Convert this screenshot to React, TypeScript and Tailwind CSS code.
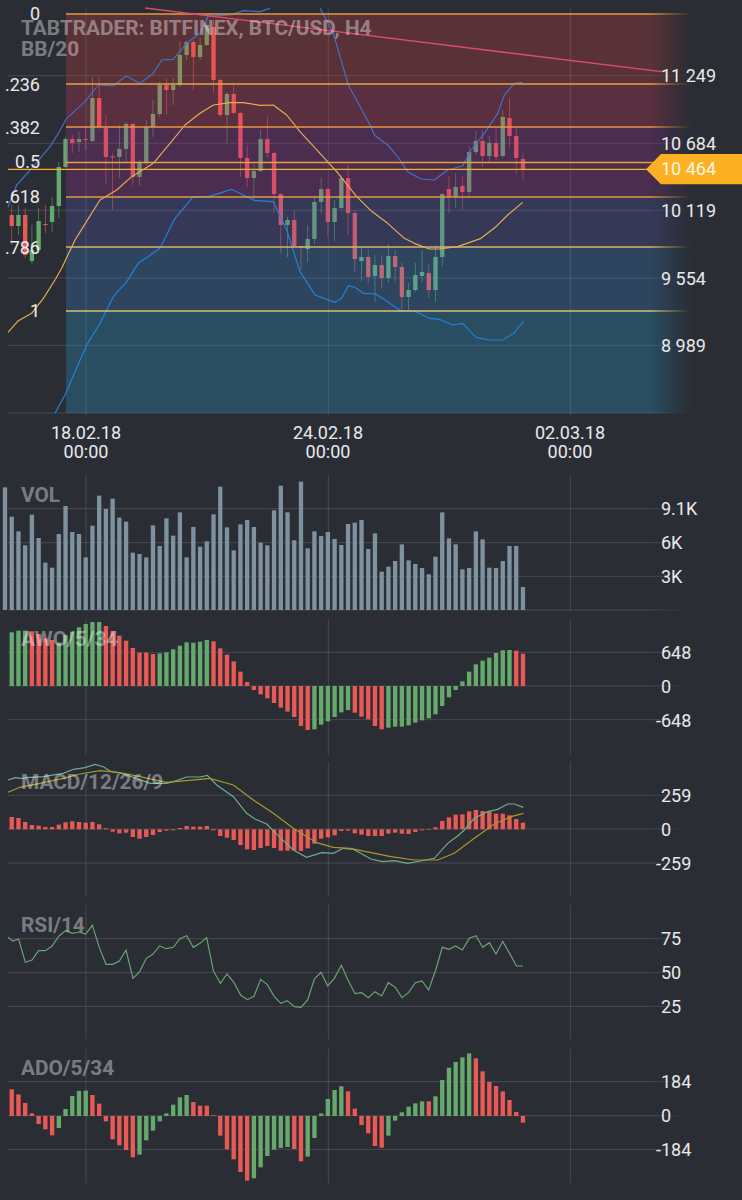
import type { ReactNode } from 'react';

const BG = '#2a2d34';
const RED = '#e95a56';
const GREEN = '#66a96c';
const GRID = 'rgba(255,255,255,0.14)';

// everything below is in 3x pixels, the same scale as the zoomed reference
const slot = (i: number) => 15 + 20.18 * i;
const poly = (pts: number[][]) => pts.map((p) => p.join(',')).join(' ');
const runs = (list: [string, number][]) => list.flatMap(([c, n]) => Array<string>(n).fill(c));

// wick top, body top, body bottom, wick bottom (px), colour. First one is slot 1.
const candles: [number, number, number, number, string][] = [
  [205, 215, 226, 245, 'r'], [205, 215, 226, 235, 'g'], [208, 215, 255, 258, 'r'], [225, 250, 261, 264, 'g'],
  [208, 221, 250, 253, 'g'], [205, 224, 225, 233, 'r'], [197, 206, 222, 232, 'g'], [162, 167, 206, 218, 'g'],
  [137, 139, 167, 168, 'g'], [135, 139, 143, 153, 'r'], [132, 139, 142, 152, 'g'], [128, 139, 140, 150, 'r'],
  [77, 98, 141, 142, 'g'], [77, 98, 127, 129, 'r'], [115, 128, 157, 184, 'r'], [153, 156.5, 157.5, 210, 'r'],
  [125, 149, 157, 178, 'g'], [122, 124, 149, 162, 'g'], [123, 124, 177, 185, 'r'], [160, 162, 177, 185, 'g'],
  [120, 127, 162, 165, 'g'], [100, 114, 127, 137, 'g'], [82, 85, 114, 117, 'g'], [78, 85, 90, 115, 'r'],
  [78, 85, 90, 105, 'g'], [41, 55, 85, 87, 'g'], [40, 42, 55, 60, 'g'], [40, 42, 57, 90, 'r'],
  [37, 45, 57, 60, 'g'], [17, 25, 45, 46, 'g'], [20, 27, 80, 93, 'r'], [78, 80, 115, 117, 'r'],
  [92, 94, 115, 143, 'g'], [84, 94, 113, 114, 'r'], [112, 113, 158, 177, 'r'], [145, 158, 178, 187, 'r'],
  [163, 171, 178, 200, 'g'], [130, 139, 171, 172, 'g'], [117, 139, 153, 158, 'r'], [152, 153, 194, 213, 'r'],
  [193, 194, 225, 253, 'r'], [217, 220, 225, 257, 'g'], [210, 220, 246, 247, 'r'], [246, 246, 248, 270, 'r'],
  [225, 239, 249, 262, 'g'], [198, 202, 239, 244, 'g'], [178, 189, 202, 213, 'g'], [187, 189, 222, 236, 'r'],
  [200, 208, 222, 241, 'g'], [175, 178, 208, 209, 'g'], [165, 178, 213, 235, 'r'], [210, 213, 259, 272, 'r'],
  [248, 257, 261, 281, 'g'], [250, 257, 277, 283, 'r'], [255, 265, 276, 302, 'g'], [255, 265, 278, 288, 'r'],
  [244, 256, 278, 283, 'g'], [250, 256, 267, 283, 'r'], [262, 267, 297, 310, 'r'], [283, 290, 297, 310, 'g'],
  [263, 275, 290, 292, 'g'], [250, 272, 276, 282, 'g'], [264, 273, 290, 298, 'r'], [245, 257, 290, 302, 'g'],
  [193, 194, 257, 267, 'g'], [176, 189, 197, 213, 'r'], [173, 187, 197, 208, 'g'], [176, 186, 192, 210, 'r'],
  [146, 152, 192, 198, 'g'], [131, 141, 152, 155, 'g'], [130, 141, 156, 167, 'r'], [136, 143, 156, 163, 'g'],
  [127, 143, 157, 160, 'r'], [110, 117, 156, 158, 'g'], [98, 118, 136, 147, 'r'], [128, 136, 158, 174, 'r'],
  [153, 159, 169, 180, 'r'],
];

const bbUpper = [
  [24, 622], [50, 555], [100, 500], [150, 440], [175, 400], [200, 355], [255, 305], [295, 255], [340, 258], [378, 228],
  [420, 250], [460, 220], [485, 180], [520, 178], [560, 130], [600, 100], [625, 48], [690, 45], [730, 32], [780, 35], [810, 25],
];
const bbUpper2 = [
  [960, 25], [1000, 100], [1045, 255], [1113, 380], [1123, 405], [1163, 435], [1193, 470], [1223, 515], [1263, 537],
  [1303, 540], [1343, 510], [1388, 498], [1413, 450], [1453, 400], [1493, 340], [1513, 285], [1543, 250], [1568, 247],
];
const bbLower = [
  [165, 1240], [195, 1185], [260, 1035], [300, 970], [340, 890], [380, 845], [415, 790], [480, 745], [525, 655], [580, 590],
  [625, 590], [695, 568], [765, 602], [820, 605], [860, 690], [900, 815], [945, 885], [1005, 907], [1025, 895], [1045, 857],
  [1065, 862], [1090, 880], [1128, 882], [1203, 933], [1243, 933], [1288, 955], [1318, 958], [1358, 975], [1388, 970],
  [1428, 1012], [1468, 1020], [1508, 1020], [1543, 998], [1571, 963],
];
const ma = [
  [24, 997], [55, 962], [95, 940], [130, 895], [165, 840], [185, 805], [225, 720], [250, 680], [300, 600], [350, 570],
  [395, 530], [460, 490], [510, 430], [555, 375], [600, 340], [640, 315], [690, 308], [730, 308], [780, 316], [820, 315],
  [860, 345], [900, 395], [960, 460], [1010, 515], [1070, 590], [1113, 632], [1163, 670], [1213, 715], [1243, 730],
  [1288, 747], [1318, 747], [1373, 740], [1443, 715], [1488, 680], [1523, 645], [1568, 607],
];

const zones = [
  { y: 14, h: 70, fill: 'rgba(232,68,64,0.25)' },
  { y: 84, h: 43, fill: 'rgba(236,56,96,0.25)' },
  { y: 127, h: 70, fill: 'rgba(172,48,160,0.25)' },
  { y: 197, h: 50, fill: 'rgba(88,96,192,0.25)' },
  { y: 247, h: 64, fill: 'rgba(56,144,224,0.25)' },
  { y: 311, h: 102, fill: 'rgba(40,176,232,0.25)' },
];
const fibLines = [
  { y: 14, c: '#e39a3e' }, { y: 84, c: '#e9a04a' }, { y: 127, c: '#e9983f' }, { y: 162.5, c: '#e9a040' },
  { y: 197, c: '#dd9c48' }, { y: 247, c: '#d9b468' }, { y: 311, c: '#d9c274' },
];
const fibLabels = ['0', '.236', '.382', '0.5', '.618', '.786', '1'];

const vol = [
  52, 140, 184, 226, 134, 204, 278, 293, 192, 108, 186, 192, 262, 167, 77, 117, 86, 143, 155, 248, 252, 262, 166, 228, 145, 197,
  127, 262, 171, 230, 214, 133, 50, 172, 241, 163, 150, 171, 218, 226, 121, 47, 127, 211, 35, 235, 184, 198, 186, 207, 225, 162,
  158, 150, 237, 190, 305, 290, 273, 223, 271, 282, 294, 313, 260, 127, 205, 223, 298, 294, 184, 208, 293, 294, 273, 228, 228, 351,
];
const awo = [
  487, 482, 482, 484, 492, 505, 510, 518, 495, 485, 472, 462, 456, 456, 468, 483, 497, 512, 534, 548, 548, 552, 550, 547, 538, 527,
  517, 518, 515, 510, 514, 535, 554, 574, 605, 636, 660, 673, 685, 699, 713, 725, 741, 768, 780, 778, 764, 754, 741, 727, 720, 728,
  740, 748, 768, 778, 773, 770, 770, 766, 758, 751, 745, 733, 708, 682, 660, 634, 605, 583, 572, 563, 549, 541, 540, 542, 551,
];
const awoColors = runs([['g', 3], ['r', 4], ['g', 7], ['r', 8], ['g', 8], ['r', 15], ['g', 6], ['r', 5], ['g', 19], ['r', 2]]);
const macd = [
  201, 204, 216, 225, 227, 231, 231, 224, 217, 214, 216, 218, 216, 223, 235, 245, 250, 248, 261, 266, 261, 255, 246, 242, 241, 234,
  228, 230, 230, 228, 241, 258, 263, 270, 285, 298, 300, 294, 288, 294, 302, 302, 301, 303, 295, 281, 266, 262, 256, 243, 242, 250,
  254, 258, 258, 258, 251, 248, 251, 252, 246, 241, 240, 232, 213, 202, 194, 193, 184, 180, 183, 184, 191, 191, 196, 207, 218,
];
const macdFast = [
  [24, 90], [45, 83], [65, 85], [90, 82], [130, 80], [190, 70], [220, 58], [255, 53], [285, 43], [310, 50], [330, 63], [370, 72],
  [410, 85], [450, 100], [500, 100], [530, 92], [560, 81], [600, 81], [622, 76], [650, 105], [700, 140], [740, 190], [765, 207],
  [800, 222], [840, 262], [880, 300], [920, 322], [965, 308], [1000, 310], [1030, 295], [1060, 298], [1113, 327], [1148, 335],
  [1183, 332], [1223, 340], [1263, 333], [1303, 325], [1343, 280], [1373, 258], [1393, 240], [1423, 205], [1463, 185], [1493, 178],
  [1523, 162], [1543, 162], [1570, 172],
];
const macdSlow = [
  [24, 127], [60, 112], [120, 100], [190, 85], [240, 72], [300, 62], [360, 68], [420, 80], [500, 97], [560, 92], [630, 85], [700, 105],
  [760, 150], [820, 190], [880, 235], [950, 278], [1000, 292], [1050, 295], [1113, 308], [1173, 320], [1243, 330], [1313, 330],
  [1363, 310], [1423, 265], [1483, 222], [1533, 200], [1570, 190],
];
const rsi = [
  [24, 112], [38, 123], [56, 117], [76, 187], [96, 180], [116, 152], [136, 152], [156, 138], [177, 108], [197, 92], [217, 100],
  [237, 96], [257, 102], [277, 76], [298, 143], [318, 193], [338, 193], [358, 183], [378, 150], [399, 235], [419, 215], [439, 175],
  [459, 162], [479, 138], [499, 146], [520, 142], [540, 116], [560, 107], [580, 142], [600, 130], [620, 113], [640, 212], [661, 250],
  [681, 222], [702, 248], [722, 285], [742, 299], [762, 289], [782, 238], [802, 254], [823, 290], [843, 310], [862, 302], [883, 320],
  [903, 322], [923, 300], [943, 237], [963, 217], [983, 258], [1003, 235], [1024, 196], [1044, 240], [1065, 281], [1085, 278],
  [1105, 293], [1125, 275], [1145, 288], [1165, 248], [1186, 262], [1206, 293], [1226, 277], [1246, 248], [1266, 243], [1286, 270],
  [1307, 210], [1327, 142], [1347, 148], [1367, 138], [1387, 150], [1408, 115], [1428, 107], [1448, 142], [1468, 128], [1488, 162],
  [1508, 124], [1529, 160], [1549, 198], [1569, 198],
];
const ado = [
  568, 583, 609, 640, 672, 688, 706, 684, 627, 588, 573, 572, 585, 611, 664, 718, 736, 750, 772, 764, 721, 692, 664, 640, 614, 592,
  585, 606, 617, 617, 646, 707, 748, 778, 816, 842, 835, 802, 768, 749, 744, 741, 747, 784, 770, 714, 640, 597, 570, 559, 574, 626,
  675, 700, 738, 743, 707, 662, 637, 620, 610, 604, 604, 589, 540, 503, 486, 472, 460, 475, 514, 546, 558, 574, 600, 636, 668,
];
const adoColors = runs([['r', 7], ['g', 5], ['r', 7], ['g', 8], ['r', 9], ['g', 6], ['r', 2], ['g', 6], ['r', 6], ['g', 6], ['r', 1], ['g', 6], ['r', 8]]);

function GridLines({ rows, from, to }: { rows: number[]; from: number; to: number }) {
  return (
    <g stroke={GRID} strokeWidth={3}>
      {rows.map((y) => (
        <line key={y} x1={24} x2={2070} y1={y} y2={y} />
      ))}
      {[258, 985, 1711].map((x) => (
        <line key={x} x1={x} x2={x} y1={from} y2={to} />
      ))}
    </g>
  );
}

function Bars({ tops, zero, colors }: { tops: number[]; zero: number; colors?: string[] }) {
  return (
    <g>
      {tops.map((top, i) => (
        <rect
          key={i}
          x={slot(i + 1) - 6.5}
          width={13}
          y={Math.min(top, zero)}
          height={Math.abs(top - zero)}
          fill={colors && colors[i] === 'g' ? GREEN : RED}
        />
      ))}
    </g>
  );
}

function Fade({ name }: { name: string }) {
  return (
    <>
      <defs>
        <linearGradient id={name}>
          <stop offset="0" stopColor={BG} stopOpacity={0} />
          <stop offset="1" stopColor={BG} stopOpacity={1} />
        </linearGradient>
      </defs>
      <rect x={1950} y={-100} width={122} height={1700} fill={`url(#${name})`} />
    </>
  );
}

function Chart({ className, viewBox, children }: { className: string; viewBox: string; children: ReactNode }) {
  return (
    <svg className={`block w-full ${className}`} viewBox={viewBox}>
      {children}
    </svg>
  );
}

function Axis({ className, row, labels }: { className: string; row: string; labels: string[] }) {
  return (
    <div className={`absolute left-[661px] flex flex-col text-[18px] text-white/90 ${className}`}>
      {labels.map((text) => (
        <span key={text} className={`${row} whitespace-nowrap ${text.startsWith('-') ? '-ml-[5px]' : ''}`}>
          {text}
        </span>
      ))}
    </div>
  );
}

function Title({ className, children }: { className: string; children: ReactNode }) {
  return <div className={`absolute left-[21px] whitespace-nowrap text-[20.8px] font-bold leading-[21px] text-white/40 ${className}`}>{children}</div>;
}

export default function App() {
  return (
    <div className="flex h-[1200px] w-full flex-col overflow-hidden bg-[#2a2d34] font-['Roboto',sans-serif]">
      <section className="relative flex h-[466px] flex-col">
        <Chart className="h-[416px]" viewBox="0 0 2226 1248">
          <GridLines rows={[227, 430, 631, 834, 1036, 1239]} from={25} to={1245} />
          <g>
            {candles.map(([wt, bt, bb, wb, c], i) => {
              const x = slot(i + 1);
              return (
                <g key={i} fill={c === 'g' ? GREEN : RED}>
                  <rect x={x - 1.2} width={2.4} y={wt * 3} height={(wb - wt) * 3} opacity={0.7} />
                  <rect x={x - 6.5} width={13} y={bt * 3} height={Math.max((bb - bt) * 3, 3)} />
                </g>
              );
            })}
          </g>
          {zones.map((z) => (
            <rect key={z.y} x={198} y={z.y * 3} width={1874} height={z.h * 3} fill={z.fill} />
          ))}
          <g fill="none" strokeWidth={3.5} strokeLinejoin="round">
            <polyline points={poly(bbUpper)} stroke="#4270c8" />
            <polyline points={poly(bbUpper2)} stroke="#4270c8" />
            <polyline points={poly(bbLower)} stroke="#2780d8" />
            <polyline points={poly(ma)} stroke="#e6ae50" />
          </g>
          {fibLines.map((l) => (
            <line key={l.y} x1={198} x2={2070} y1={l.y * 3} y2={l.y * 3} stroke={l.c} strokeWidth={4} />
          ))}
          <Fade name="fade-main" />
          <line x1={24} x2={1945} y1={508} y2={508} stroke="#f3b130" strokeWidth={4} />
          <line x1={435} x2={1985} y1={24} y2={215} stroke="#dc4c6e" strokeWidth={4} />
          <polygon points="1938,508 1983,462 2226,462 2226,553 1983,553" fill="#fcb122" />
        </Chart>
        <div className="-ml-[35px] flex pt-[7px] text-[18px] leading-[19px] text-white/90">
          {['18.02.18', '24.02.18', '02.03.18'].map((date) => (
            <div key={date} className="flex w-[242px] flex-col items-center">
              <span>{date}</span>
              <span>00:00</span>
            </div>
          ))}
        </div>
        <Title className="top-[18px]">
          <div>TABTRADER: BITFINEX, BTC/USD, H4</div>
          <div>BB/20</div>
        </Title>
        <div className="absolute left-0 top-[5px] grid w-[40px] grid-rows-[71px_43px_34px_35px_51px_63px_18px] justify-items-end text-[18px] leading-[18px] text-white/90">
          {fibLabels.map((text) => (
            <span key={text}>{text}</span>
          ))}
        </div>
        <Axis className="top-[42px]" row="h-[67.5px] leading-[67.5px]" labels={['11 249', '10 684', '10 119', '9 554', '8 989']} />
        <span className="absolute left-[661px] top-[160px] text-[18px] leading-[18px] text-white/90">10 464</span>
      </section>

      <section className="relative h-[148px]">
        <Chart className="h-full" viewBox="0 -12 2226 444">
          <GridLines rows={[116, 218, 319, 420]} from={15} to={420} />
          <g fill="#7d919f">
            {vol.map((top, i) => (
              <rect key={i} x={slot(i) - 6.5} width={13} y={top} height={420 - top} />
            ))}
          </g>
          <Fade name="fade-vol" />
        </Chart>
        <Title className="top-[19px]">VOL</Title>
        <Axis className="top-[26px]" row="h-[33.75px] leading-[33.75px]" labels={['9.1K', '6K', '3K']} />
      </section>

      <section className="relative h-[143px]">
        <Chart className="h-full" viewBox="0 432 2226 429">
          <GridLines rows={[547, 648, 749]} from={447} to={855} />
          <Bars tops={awo} zero={648} colors={awoColors} />
          <Fade name="fade-awo" />
        </Chart>
        <Title className="top-[15px]">AWO/5/34</Title>
        <Axis className="top-[22px]" row="h-[34px] leading-[34px]" labels={['648', '0', '-648']} />
      </section>

      <section className="relative h-[144px]">
        <Chart className="h-full" viewBox="0 21 2226 432">
          <GridLines rows={[136, 237, 339]} from={35} to={440} />
          <Bars tops={macd} zero={238} />
          <g fill="none" strokeWidth={3.5}>
            <polyline points={poly(macdFast)} stroke="#6fae92" />
            <polyline points={poly(macdSlow)} stroke="#a8982c" />
          </g>
          <Fade name="fade-macd" />
        </Chart>
        <Title className="top-[15px]">MACD/12/26/9</Title>
        <Axis className="top-[22px]" row="h-[34px] leading-[34px]" labels={['259', '0', '-259']} />
      </section>

      <section className="relative h-[143px]">
        <Chart className="h-full" viewBox="0 3 2226 429">
          <GridLines rows={[116, 218, 319]} from={15} to={418} />
          <polyline points={poly(rsi)} fill="none" stroke="#6aa574" strokeWidth={3.5} />
          <Fade name="fade-rsi" />
        </Chart>
        <Title className="top-[14px]">RSI/14</Title>
        <Axis className="top-[21px]" row="h-[33.75px] leading-[33.75px]" labels={['75', '50', '25']} />
      </section>

      <section className="relative h-[156px]">
        <Chart className="h-full" viewBox="0 432 2226 468">
          <GridLines rows={[545, 647, 748]} from={447} to={851} />
          <Bars tops={ado} zero={648} colors={adoColors} />
          <Fade name="fade-ado" />
        </Chart>
        <Title className="top-[14px]">ADO/5/34</Title>
        <Axis className="top-[21px]" row="h-[33.75px] leading-[33.75px]" labels={['184', '0', '-184']} />
      </section>
    </div>
  );
}
